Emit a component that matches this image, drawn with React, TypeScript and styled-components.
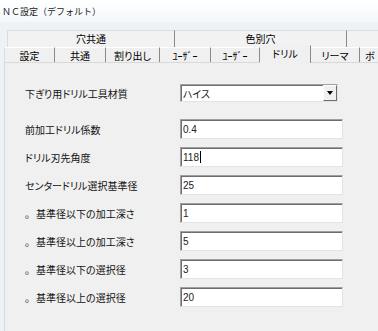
import React from "react";
import styled, { createGlobalStyle } from "styled-components";

const GlobalStyle = createGlobalStyle`
  html, body {
    margin: 0;
    padding: 0;
  }
  body {
    background: #f0f0f0;
    font-family: "Noto Sans CJK JP", "Liberation Sans", sans-serif;
    color: #000;
  }
`;

const Window = styled.div`
  width: 378px;
  height: 331px;
  overflow: hidden;
  display: flex;
  flex-direction: column;
  background: #edf2f6;
`;

const TitleBar = styled.div`
  height: 22px;
  padding-left: 2px;
  display: flex;
  align-items: center;
  font-size: 9px;
  color: #1a1a1a;
  background: linear-gradient(#ffffff, #f4f8fb);
`;

const TabStrip = styled.div`
  padding-top: 8px;
  display: flex;
  flex-direction: column;
`;

const TabRow = styled.div<{ $indent: number; $height: number }>`
  display: flex;
  align-items: flex-end;
  height: ${(p) => p.$height}px;
  padding-left: ${(p) => p.$indent}px;
  white-space: nowrap;
`;

const BackTab = styled.div<{ $w: number }>`
  flex: none;
  box-sizing: border-box;
  width: ${(p) => p.$w}px;
  height: 17px;
  display: flex;
  align-items: center;
  justify-content: center;
  font-size: 10px;
  background: #f2f2f2;
  border-top: 1px solid #dcdcdc;
  border-right: 1px solid #8a8a8a;
  padding-bottom: 2px;

  &:first-child {
    border-left: 1px solid #dcdcdc;
  }
`;

const FrontTab = styled.div<{ $w: number; $active?: boolean; $start?: boolean }>`
  flex: none;
  box-sizing: border-box;
  width: ${(p) => p.$w}px;
  height: ${(p) => (p.$active ? 18 : 15)}px;
  margin-bottom: ${(p) => (p.$active ? -1 : 0)}px;
  position: relative;
  z-index: ${(p) => (p.$active ? 1 : 0)};
  display: flex;
  align-items: ${(p) => (p.$active ? "flex-start" : "center")};
  justify-content: ${(p) => (p.$start ? "flex-start" : "center")};
  padding-left: ${(p) => (p.$start ? 5 : 0)}px;
  font-size: 10px;
  font-feature-settings: "palt";
  background: #f0f0f0;
  border-top: 1px solid ${(p) => (p.$active ? "#f0f0f0" : "#ffffff")};
  border-right: 1px solid #8a8a8a;

  &:first-child {
    border-left: 1px solid #dcdcdc;
  }
`;

const Panel = styled.div`
  flex: 1;
  margin-left: 4px;
  border-left: 1px solid #d9d9d9;
  border-top: 1px solid #d9d9d9;
  background: #f0f0f0;
  padding: 21px 0 0 20px;
  display: flex;
  flex-direction: column;
`;

const Row = styled.div<{ $after: number }>`
  display: flex;
  align-items: center;
  margin-bottom: ${(p) => p.$after}px;
`;

const Label = styled.div`
  width: 155px;
  flex: none;
  font-size: 10px;
  font-feature-settings: "palt";
  white-space: nowrap;
  color: #111;
`;

const Bullet = styled.span`
  display: inline-block;
  width: 11px;
  font-feature-settings: normal;
`;

const Field = styled.div`
  box-sizing: border-box;
  width: 163px;
  height: 20px;
  display: flex;
  align-items: center;
  padding-left: 2px;
  background: #fff;
  border: 1px solid;
  border-color: #a0a0a0 #e3e3e3 #e3e3e3 #a0a0a0;
  box-shadow: inset 1px 1px 0 #6e6e6e;
  font-family: "Liberation Sans", Arial, sans-serif;
  font-size: 10px;
  color: #222;
`;

const Caret = styled.span`
  display: inline-block;
  width: 1px;
  height: 12px;
  margin-left: 1px;
  background: #000;
`;

const SelectBox = styled(Field)`
  width: 158px;
  height: 18px;
  padding-right: 0;
  justify-content: space-between;
  font-family: "Noto Sans CJK JP", sans-serif;
  font-feature-settings: "palt";
`;

const DropButton = styled.div`
  box-sizing: border-box;
  width: 14px;
  height: 16px;
  display: flex;
  align-items: center;
  justify-content: center;
  background: #f0f0f0;
  border: 1px solid;
  border-color: #ffffff #6e6e6e #6e6e6e #ffffff;
`;

const Arrow = styled.span`
  width: 0;
  height: 0;
  border-left: 3.5px solid transparent;
  border-right: 3.5px solid transparent;
  border-top: 4px solid #000;
`;

const backTabs = [
  { label: "穴共通", w: 168 },
  { label: "色別穴", w: 172 },
  { label: "", w: 40 },
];

const frontTabs = [
  { label: "設定", w: 51 },
  { label: "共通", w: 51 },
  { label: "割り出し", w: 54 },
  { label: "ﾕｰｻﾞｰ", w: 51 },
  { label: "ﾕｰｻﾞｰ", w: 49 },
  { label: "ドリル", w: 51, active: true },
  { label: "リーマ", w: 49 },
  { label: "ボ", w: 40, start: true },
];

const fields = [
  { label: "前加工ドリル係数", value: "0.4" },
  { label: "ドリル刃先角度", value: "118", caret: true },
  { label: "センタードリル選択基準径", value: "25" },
  { label: "基準径以下の加工深さ", value: "1", sub: true },
  { label: "基準径以上の加工深さ", value: "5", sub: true },
  { label: "基準径以下の選択径", value: "3", sub: true },
  { label: "基準径以上の選択径", value: "20", sub: true },
];

export default function App() {
  return (
    <>
      <GlobalStyle />
      <Window>
        <TitleBar>ＮＣ設定（デフォルト）</TitleBar>
        <TabStrip>
          <TabRow $indent={7} $height={17}>
            {backTabs.map((t, i) => (
              <BackTab key={i} $w={t.w}>
                {t.label}
              </BackTab>
            ))}
          </TabRow>
          <TabRow $indent={4} $height={15}>
            {frontTabs.map((t, i) => (
              <FrontTab key={i} $w={t.w} $active={t.active} $start={t.start}>
                {t.label}
              </FrontTab>
            ))}
          </TabRow>
        </TabStrip>
        <Panel>
          <Row $after={17}>
            <Label>下ぎり用ドリル工具材質</Label>
            <SelectBox>
              ハイス
              <DropButton>
                <Arrow />
              </DropButton>
            </SelectBox>
          </Row>
          {fields.map((f, i) => (
            <Row key={i} $after={8}>
              <Label>
                {f.sub && <Bullet>。</Bullet>}
                {f.label}
              </Label>
              <Field>
                {f.value}
                {f.caret && <Caret />}
              </Field>
            </Row>
          ))}
        </Panel>
      </Window>
    </>
  );
}
